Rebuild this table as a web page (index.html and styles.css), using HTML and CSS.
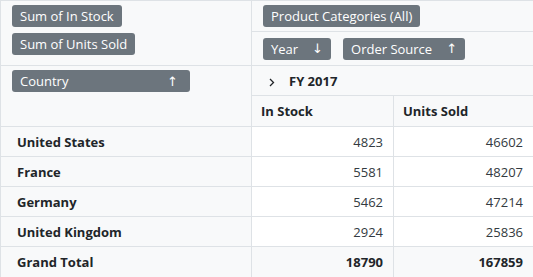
FILE: index.html
```html
<!DOCTYPE html>
<html>
<head>
<meta charset="utf-8">
<link rel="stylesheet" href="styles.css">
</head>
<body>
<div class="pivot">
  <div class="cell hdr values">
    <span class="chip">Sum of In Stock</span>
    <span class="chip">Sum of Units Sold</span>
  </div>
  <div class="cell hdr filters">
    <span class="chip">Product Categories (All)</span>
  </div>
  <div class="cell hdr colaxis">
    <span class="chip">Year <span class="arr">↓</span></span>
    <span class="chip">Order Source <span class="arr">↑</span></span>
  </div>
  <div class="cell hdr rowaxis">
    <span class="chip wide">Country <span class="arr">↑</span></span>
  </div>
  <div class="cell hdr year">
    <svg class="chev" width="6" height="9" viewBox="0 0 6 9"><path d="M1 1l3.5 3.5L1 8" fill="none" stroke="#212529" stroke-width="1.3"/></svg>
    <span>FY 2017</span>
  </div>
  <div class="cell hdr colhead">In Stock</div>
  <div class="cell hdr colhead">Units Sold</div>

  <div class="cell hdr rowhead">United States</div>
  <div class="cell num">4823</div>
  <div class="cell num">46602</div>

  <div class="cell hdr rowhead">France</div>
  <div class="cell num">5581</div>
  <div class="cell num">48207</div>

  <div class="cell hdr rowhead">Germany</div>
  <div class="cell num">5462</div>
  <div class="cell num">47214</div>

  <div class="cell hdr rowhead">United Kingdom</div>
  <div class="cell num">2924</div>
  <div class="cell num">25836</div>

  <div class="cell hdr rowhead">Grand Total</div>
  <div class="cell hdr num total">18790</div>
  <div class="cell hdr num total">167859</div>
</div>
</body>
</html>
```

FILE: styles.css
```css
html, body {
  margin: 0;
  padding: 0;
  background: #ffffff;
}
body {
  font-family: "Open Sans", "Noto Sans", sans-serif;
  font-size: 13px;
  color: #212529;
}
.pivot {
  display: grid;
  grid-template-columns: 251px 142px 140px;
  grid-template-rows: 31px 34px 30px 31px 30px 30px 30px 30px 31px;
  width: 533px;
  height: 277px;
  box-sizing: border-box;
  border-top: 1px solid #dee2e6;
  border-left: 1px solid #dee2e6;
}
.cell {
  border-right: 1px solid #dee2e6;
  border-bottom: 1px solid #dee2e6;
  box-sizing: border-box;
  background: #ffffff;
  display: flex;
  align-items: center;
  min-width: 0;
}
.hdr { background: #f8f9fa; }
.values {
  grid-column: 1;
  grid-row: 1 / 3;
  flex-direction: column;
  align-items: flex-start;
  justify-content: flex-start;
  gap: 6px;
  padding: 4px 0 0 11px;
}
.filters {
  grid-column: 2 / 4;
  grid-row: 1;
  padding: 0 0 0 11px;
}
.colaxis {
  grid-column: 2 / 4;
  grid-row: 2;
  padding: 0 0 0 11px;
  gap: 12px;
}
.rowaxis {
  grid-column: 1;
  grid-row: 3 / 5;
  align-items: flex-start;
  padding: 4px 0 0 11px;
}
.year {
  grid-column: 2 / 4;
  grid-row: 3;
  padding: 0 0 0 17px;
  font-weight: 700;
  gap: 14px;
}
.chev { flex: none; margin-top: 3px; }
.chip {
  display: inline-flex;
  align-items: center;
  height: 22px;
  box-sizing: border-box;
  padding: 0 8px;
  background: #6c757d;
  color: #ffffff;
  border-radius: 3px;
  font-size: 13px;
  white-space: nowrap;
}
.chip .arr {
  margin-left: 14px;
  font-family: "DejaVu Sans", sans-serif;
  font-size: 13px;
}
.chip.wide {
  width: 178px;
  justify-content: space-between;
  padding-right: 12px;
}
.colhead {
  font-weight: 700;
  padding-left: 9px;
}
.rowhead {
  font-weight: 700;
  padding-left: 16px;
}
.num {
  justify-content: flex-end;
  padding-right: 10px;
  color: #333a40;
}
.total {
  font-weight: 700;
  color: #212529;
}
```
